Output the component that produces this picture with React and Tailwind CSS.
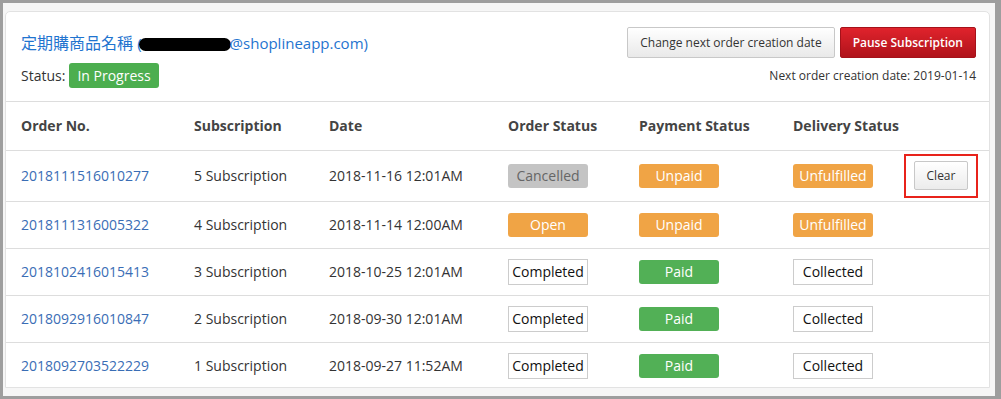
const rows = [
  { no: "2018111516010277", sub: "5 Subscription", date: "2018-11-16 12:01AM", order: "cancelled", pay: "unpaid", del: "unfulfilled", clear: true },
  { no: "2018111316005322", sub: "4 Subscription", date: "2018-11-14 12:00AM", order: "open", pay: "unpaid", del: "unfulfilled" },
  { no: "2018102416015413", sub: "3 Subscription", date: "2018-10-25 12:01AM", order: "completed", pay: "paid", del: "collected" },
  { no: "2018092916010847", sub: "2 Subscription", date: "2018-09-30 12:01AM", order: "completed", pay: "paid", del: "collected" },
  { no: "2018092703522229", sub: "1 Subscription", date: "2018-09-27 11:52AM", order: "completed", pay: "paid", del: "collected" },
];

const Badge = ({ kind }) => {
  if (kind === "cancelled")
    return <span className="inline-flex w-[80px] h-[24px] items-center justify-center rounded-[3px] bg-[#c4c4c4] text-[#666]">Cancelled</span>;
  if (kind === "open")
    return <span className="inline-flex w-[80px] h-[24px] items-center justify-center rounded-[3px] bg-[#f0a445] text-white">Open</span>;
  if (kind === "unpaid")
    return <span className="inline-flex w-[80px] h-[24px] items-center justify-center rounded-[3px] bg-[#f0a445] text-white">Unpaid</span>;
  if (kind === "unfulfilled")
    return <span className="inline-flex w-[80px] h-[24px] items-center justify-center rounded-[3px] bg-[#f0a445] text-white">Unfulfilled</span>;
  if (kind === "paid")
    return <span className="inline-flex w-[80px] h-[24px] items-center justify-center rounded-[3px] bg-[#52b056] text-white">Paid</span>;
  if (kind === "completed")
    return <span className="inline-flex w-[80px] h-[26px] items-center justify-center border border-[#ccc] bg-white text-[#111]">Completed</span>;
  return <span className="inline-flex w-[80px] h-[26px] items-center justify-center border border-[#ccc] bg-white text-[#111]">Collected</span>;
};

export default function App() {
  return (
    <div className="w-[1001px] h-[399px] bg-[#9e9e9e] pt-[3px] pl-[3px] pr-[6px] pb-[3px] font-['Open_Sans',sans-serif] text-[14px] text-[#333]">
      <div className="h-full bg-[#f6f6f6] pt-[8px] pl-[2px] pr-[5px]">
        <div className="h-[377px] bg-white border border-[#e2e2e2] rounded-t-[5px] overflow-hidden">
          {/* header */}
          <div className="flex justify-between h-[90px] border-b border-[#ddd] pl-[15px] pr-[13px]">
            <div className="pt-[20px]">
              <div className="text-[16px] text-[#1f74cf] leading-[22px] whitespace-nowrap font-['Open_Sans','Noto_Sans_CJK_TC',sans-serif]">
                定期購商品名稱 <span className="text-[15px]">(</span>
                <span className="inline-block align-middle bg-black rounded-full h-[13px] w-[92px] -ml-[3px] -mr-[1px]"></span>
                <span className="text-[15px]">@shoplineapp.com)</span>
              </div>
              <div className="flex items-center mt-[9px] gap-[4px]">
                <span>Status:</span>
                <span className="inline-flex items-center h-[25px] px-[8px] rounded-[3px] bg-[#4cae4f] text-white">In Progress</span>
              </div>
            </div>
            <div className="flex flex-col items-end pt-[15px]">
              <div className="flex gap-[5px]">
                <button className="h-[31px] px-[12px] text-[12px] text-[#333] border border-[#c8c8c8] rounded-[2px] bg-gradient-to-b from-white to-[#e9e9e9]">
                  Change next order creation date
                </button>
                <button className="h-[31px] px-[12px] text-[12px] font-semibold text-white border border-[#a5121a] rounded-[2px] bg-gradient-to-b from-[#e0232c] to-[#b0131b]">
                  Pause Subscription
                </button>
              </div>
              <div className="mt-[9px] text-[12px] text-[#333]">Next order creation date: 2019-01-14</div>
            </div>
          </div>
          {/* table */}
          <table className="w-full border-collapse table-fixed">
            <colgroup>
              <col className="w-[172px]" />
              <col className="w-[135px]" />
              <col className="w-[179px]" />
              <col className="w-[131px]" />
              <col className="w-[154px]" />
              <col className="w-[120px]" />
              <col />
            </colgroup>
            <thead>
              <tr className="h-[48px] border-b border-[#ddd] text-left whitespace-nowrap">
                <th className="pl-[15px] font-bold text-[#444]">Order No.</th>
                <th className="pl-[16px] font-bold text-[#444]">Subscription</th>
                <th className="pl-[16px] font-bold text-[#444]">Date</th>
                <th className="pl-[16px] font-bold text-[#444]">Order Status</th>
                <th className="pl-[16px] font-bold text-[#444]">Payment Status</th>
                <th className="pl-[16px] font-bold text-[#444]">Delivery Status</th>
                <th></th>
              </tr>
            </thead>
            <tbody>
              {rows.map((r, i) => (
                <tr key={i} className={`${r.clear ? "h-[51px]" : "h-[47px]"} border-b border-[#ddd] whitespace-nowrap`}>
                  <td className="pl-[15px] text-[#3a6db5]">{r.no}</td>
                  <td className="pl-[16px]">{r.sub}</td>
                  <td className="pl-[16px]">{r.date}</td>
                  <td className="pl-[16px]"><Badge kind={r.order} /></td>
                  <td className="pl-[16px]"><Badge kind={r.pay} /></td>
                  <td className="pl-[16px]"><Badge kind={r.del} /></td>
                  <td className="pl-[7px]">
                    {r.clear && (
                      <div className="inline-flex w-[74px] h-[44px] items-center justify-center border-2 border-[#e8231b]">
                        <button className="w-[54px] h-[29px] text-[12px] text-[#333] border border-[#c8c8c8] rounded-[2px] bg-gradient-to-b from-white to-[#ececec]">
                          Clear
                        </button>
                      </div>
                    )}
                  </td>
                </tr>
              ))}
            </tbody>
          </table>
        </div>
      </div>
    </div>
  );
}
